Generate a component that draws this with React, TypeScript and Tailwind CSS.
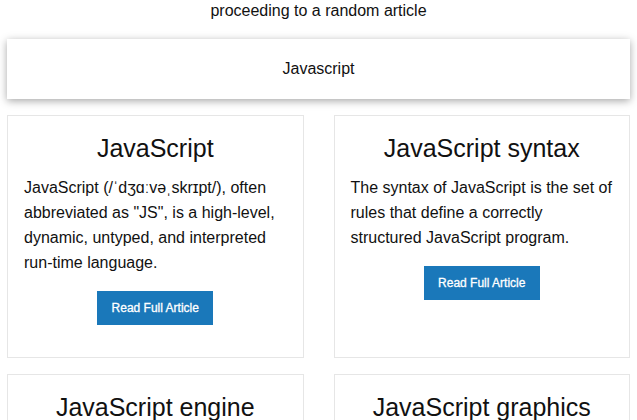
const articles = [
  {
    title: 'JavaScript',
    text: 'JavaScript (/ˈdʒɑːvəˌskrɪpt/), often abbreviated as "JS", is a high-level, dynamic, untyped, and interpreted run-time language.',
  },
  {
    title: 'JavaScript syntax',
    text: 'The syntax of JavaScript is the set of rules that define a correctly structured JavaScript program.',
  },
  {
    title: 'JavaScript engine',
    text: 'A JavaScript engine is a program or interpreter which executes JavaScript code.',
  },
  {
    title: 'JavaScript graphics library',
    text: 'JavaScript graphics libraries are collections of functions used to draw graphics.',
  },
]

export default function App() {
  return (
    <div className="min-h-screen bg-white px-[7px] font-['Liberation_Sans',Arial,sans-serif] text-[#111]">
      <p className="pt-[1px] text-center text-base leading-[19px]">proceeding to a random article</p>

      <div className="mt-[19px] flex h-[60px] items-center justify-center bg-white text-base shadow-[0_2px_8px_rgba(0,0,0,0.35)]">
        Javascript
      </div>

      <div className="mt-4 grid grid-cols-2 gap-x-[30px] gap-y-4">
        {articles.map(a => (
          <div key={a.title} className="border border-[#e6e6e6] px-4 pt-4 pb-8">
            <h2 className="mt-[2px] text-center text-[25px] leading-[28px]">{a.title}</h2>
            <p className="mt-[13px] text-base leading-[25px]">{a.text}</p>
            <div className="mt-4 flex justify-center">
              <button className="h-[34px] w-[116px] bg-[#1a78ba] text-xs text-white [-webkit-text-stroke:0.3px_white]">
                Read Full Article
              </button>
            </div>
          </div>
        ))}
      </div>
    </div>
  )
}
